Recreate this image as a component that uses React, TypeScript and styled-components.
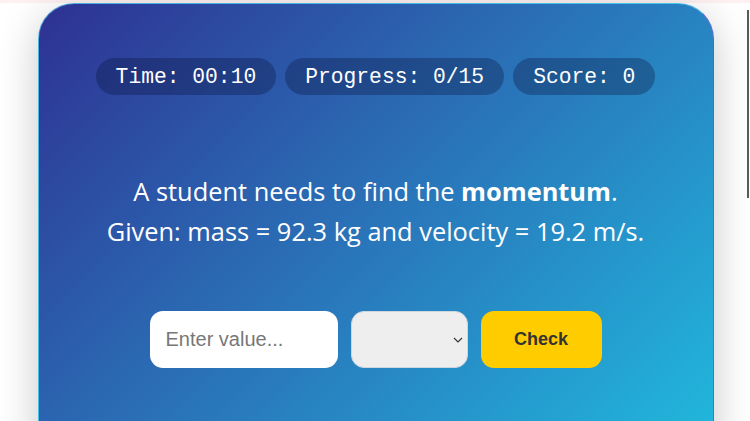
import React from "react";
import styled, { createGlobalStyle } from "styled-components";

const Global = createGlobalStyle`
  html, body { margin: 0; padding: 0; background: #ffffff; overflow: hidden; }
  body { font-family: "Open Sans", "Liberation Sans", sans-serif; }
  * { box-sizing: border-box; }
`;

const chevron =
  "url(\"data:image/svg+xml;utf8,<svg xmlns='http://www.w3.org/2000/svg' width='10' height='6' viewBox='0 0 10 6'><path d='M1 1 L5 5 L9 1' fill='none' stroke='%23333' stroke-width='1.1'/></svg>\")";

const Page = styled.div`
  width: 750px;
  height: 421px;
  overflow: hidden;
  position: relative;
  background: linear-gradient(#fdf1f1 0, #fdf1f1 3px, #ffffff 3px);
  padding-top: 3px;
  display: flex;
  justify-content: center;
`;

const ScrollThumb = styled.div`
  position: absolute;
  right: 1px;
  top: 10px;
  width: 2px;
  height: 188px;
  background: #5a5a5a;
`;

const Card = styled.div`
  width: 676px;
  margin-right: -1px;
  min-height: 520px;
  border-radius: 36px;
  border: 1px solid rgba(90, 200, 240, 0.7);
  border-right-color: rgba(120, 100, 220, 0.8);
  background: linear-gradient(135deg, #2e3192 0%, #2a72b8 45%, #1fc2e2 100%);
  box-shadow: 0 10px 40px rgba(0, 0, 0, 0.22);
  padding: 54px 20px 0;
  display: flex;
  flex-direction: column;
  align-items: center;
`;

const Stats = styled.div`
  display: flex;
  gap: 9px;
`;

const Pill = styled.div`
  height: 37px;
  padding: 0 20px;
  border-radius: 19px;
  background: rgba(10, 20, 60, 0.32);
  color: #ffffff;
  font-family: "Liberation Mono", monospace;
  font-size: 21.3px;
  display: flex;
  align-items: center;
  white-space: pre;
`;

const Question = styled.div`
  margin-top: 76px;
  color: #ffffff;
  font-size: 25.4px;
  line-height: 40px;
  text-align: center;
  strong { font-weight: 700; }
`;

const Controls = styled.div`
  margin-top: 60px;
  display: flex;
  gap: 13px;
  align-items: center;
`;

const ValueInput = styled.input`
  width: 188px;
  height: 57px;
  border: none;
  border-radius: 13px;
  background: #ffffff;
  padding: 0 16px;
  font-family: "Liberation Sans", Arial, sans-serif;
  font-size: 20px;
  color: #333;
  outline: none;
  &::placeholder { color: #777777; }
`;

const UnitSelect = styled.select`
  appearance: none;
  width: 117px;
  height: 57px;
  border: 1px solid #cfd6de;
  border-radius: 13px;
  background: #eeeeee ${chevron} no-repeat right 4px center / 10px 6px;
  font-family: "Liberation Sans", Arial, sans-serif;
  font-size: 18px;
  padding: 0 4px;
`;

const CheckButton = styled.button`
  width: 121px;
  height: 57px;
  border: none;
  border-radius: 13px;
  background: #ffcc00;
  color: #333333;
  font-family: "Liberation Sans", Arial, sans-serif;
  font-weight: 700;
  font-size: 18px;
  cursor: pointer;
`;

export default function App() {
  return (
    <Page>
      <Global />
      <Card>
        <Stats>
          <Pill>Time: 00:10</Pill>
          <Pill>Progress: 0/15</Pill>
          <Pill>Score: 0</Pill>
        </Stats>
        <Question>
          A student needs to find the <strong>momentum</strong>.
          <br />
          Given: mass = 92.3 kg and velocity = 19.2 m/s.
        </Question>
        <Controls>
          <ValueInput placeholder="Enter value..." />
          <UnitSelect defaultValue="">
            <option value=""></option>
          </UnitSelect>
          <CheckButton>Check</CheckButton>
        </Controls>
      </Card>
      <ScrollThumb />
    </Page>
  );
}
